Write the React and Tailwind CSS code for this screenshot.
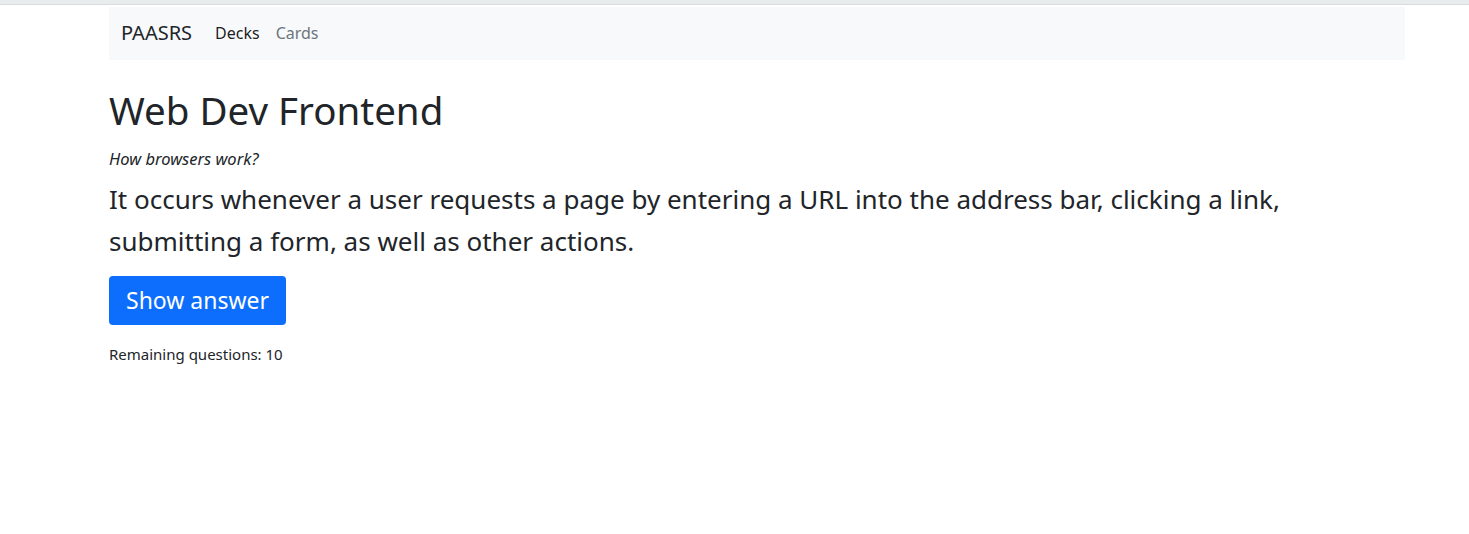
export default function App() {
  return (
    <div className="min-h-[534px] bg-white font-['Noto_Sans',sans-serif] text-[#212529]">
      <div className="h-[5px] border-b border-[#d9dcdf] bg-[#e9ecec]" />
      <div className="ml-[109px] w-[1296px]">
        <nav className="mt-[2px] flex h-[53px] items-center bg-[#f8f9fa] px-3 pb-[1px]">
          <span className="mr-[23px] text-[20px]">PAASRS</span>
          <a className="mr-4 text-[16px] text-black/90">Decks</a>
          <a className="text-[16px] text-[#6c757d]">Cards</a>
        </nav>
        <h1 className="mt-[26px] text-[38.5px] leading-[48px]">Web Dev Frontend</h1>
        <p className="mt-[13px] text-[16.5px] italic leading-[24px]">How browsers work?</p>
        <p className="mt-[7px] text-[26px] leading-[42px]">
          It occurs whenever a user requests a page by entering a URL into the address bar, clicking a link,
          <br />
          submitting a form, as well as other actions.
        </p>
        <button className="mt-[14px] h-[49px] rounded-[4px] bg-[#0d6efd] px-[17px] text-[23px] text-white">
          Show answer
        </button>
        <p className="mt-[18px] text-[15px] leading-[22px]">Remaining questions: 10</p>
      </div>
    </div>
  );
}
